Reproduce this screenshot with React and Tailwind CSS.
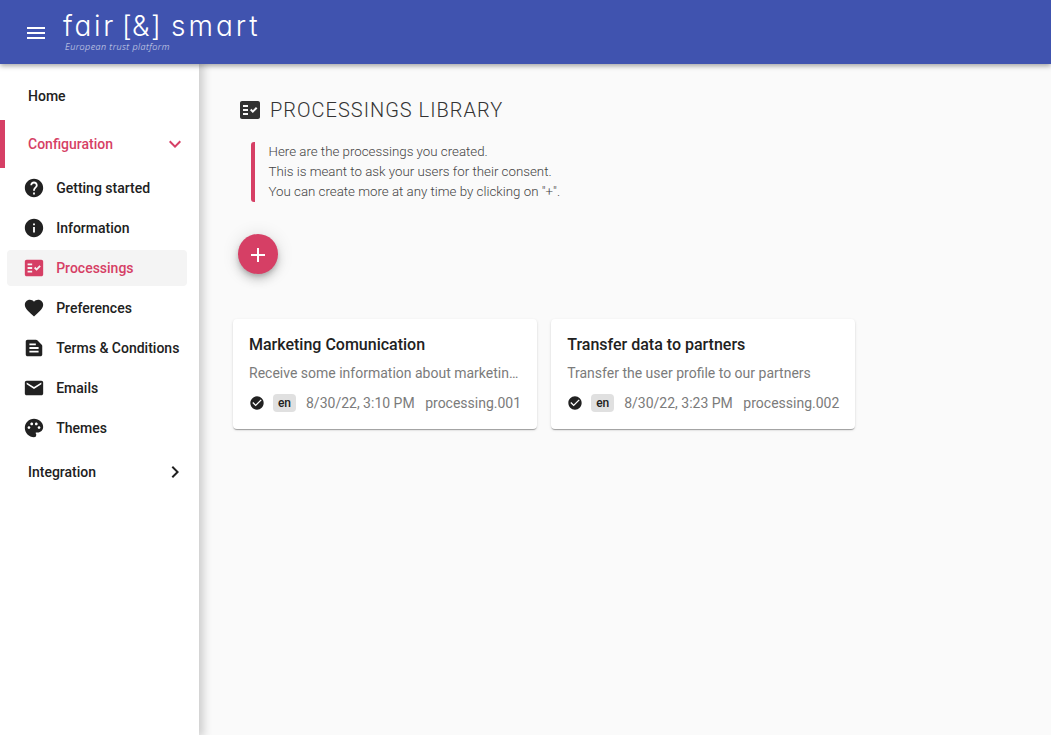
import React from 'react';
import {
  MdCheckCircle,
  MdEmail,
  MdFactCheck,
  MdFavorite,
  MdHelp,
  MdInfo,
  MdPalette,
  MdTextSnippet,
  MdAdd,
  MdMenu,
  MdKeyboardArrowDown,
  MdKeyboardArrowRight,
} from 'react-icons/md';

const links = [
  { label: 'Getting started', Icon: MdHelp },
  { label: 'Information', Icon: MdInfo },
  { label: 'Processings', Icon: MdFactCheck, active: true },
  { label: 'Preferences', Icon: MdFavorite },
  { label: 'Terms & Conditions', Icon: MdTextSnippet },
  { label: 'Emails', Icon: MdEmail },
  { label: 'Themes', Icon: MdPalette },
];

const cards = [
  {
    title: 'Marketing Comunication',
    text: 'Receive some information about marketing campaigns',
    date: '8/30/22, 3:10 PM',
    id: 'processing.001',
  },
  {
    title: 'Transfer data to partners',
    text: 'Transfer the user profile to our partners',
    date: '8/30/22, 3:23 PM',
    id: 'processing.002',
  },
];

function Header() {
  return (
    <header className="relative z-20 flex h-16 shrink-0 items-start bg-[#4053af] pl-6 text-white shadow-[0_2px_5px_rgba(0,0,0,0.35)]">
      <button className="mt-[21px]" aria-label="Menu">
        <MdMenu size={24} />
      </button>
      <div className="ml-[15px] pt-[10px]">
        <div className="flex h-[31px] items-start font-['Inter',sans-serif] text-[28px] leading-8 font-light [font-feature-settings:'cv11'_1]">
          <span className="w-[59px] tracking-[2.6px]">fair</span>
          <span className="flex w-[49px] items-start">
            <span className="w-[10px]">[</span>
            <span className="w-[19px]">&amp;</span>
            <span>]</span>
          </span>
          <span className="tracking-[3px]">smart</span>
        </div>
        <div className="ml-[2px] text-[9px] leading-3 font-light tracking-[0.45px] text-white/80 italic font-['Open_Sans',sans-serif]">
          European trust platform
        </div>
      </div>
    </header>
  );
}

function Sidebar() {
  return (
    <nav className="relative z-10 w-[199px] shrink-0 bg-white pt-2 text-sm font-medium shadow-[3px_0_8px_2px_rgba(0,0,0,0.17)]">
      <div className="flex h-12 items-center pl-7">Home</div>
      <div className="flex h-12 items-center justify-between border-l-5 border-[#d63f65] pr-3 pl-[23px] text-[#d63f65]">
        Configuration
        <MdKeyboardArrowDown size={24} />
      </div>
      <ul className="flex flex-col gap-1 py-0.5 pr-3 pl-[7px]">
        {links.map(({ label, Icon, active }) => (
          <li
            key={label}
            className={
              active
                ? 'flex h-9 items-center gap-[11.2px] rounded bg-[#f4f4f4] pl-4 whitespace-nowrap text-[#d63f65]'
                : 'flex h-9 items-center gap-[11.2px] rounded pl-4 whitespace-nowrap'
            }
          >
            <Icon size={22} className="shrink-0" />
            {label}
          </li>
        ))}
      </ul>
      <div className="flex h-12 items-center justify-between pr-3 pl-7">
        Integration
        <MdKeyboardArrowRight size={24} />
      </div>
    </nav>
  );
}

function Card({ title, text, date, id }) {
  return (
    <article className="h-[110px] w-[304px] rounded bg-white px-4 pt-[14px] shadow-[0_2px_1px_-1px_rgba(0,0,0,0.2),0_1px_1px_rgba(0,0,0,0.14),0_1px_3px_rgba(0,0,0,0.12)]">
      <h2 className="text-base leading-6 font-medium">{title}</h2>
      <p className="mt-1.5 truncate text-sm leading-5 text-[#7b7b7b]">{text}</p>
      <div className="mt-2.5 flex h-5 items-center text-sm whitespace-nowrap text-[#7b7b7b]">
        <MdCheckCircle size={16} className="shrink-0 text-[#212121]" />
        <span className="ml-2 flex h-[18px] w-[23px] shrink-0 items-center justify-center rounded bg-[#e0e0e0] text-xs font-medium text-[#212121]">
          en
        </span>
        <span className="ml-[10px]">{date}</span>
        <span className="ml-[10.5px]">{id}</span>
      </div>
    </article>
  );
}

export default function App() {
  return (
    <div className="flex h-screen flex-col overflow-hidden bg-[#fafafa] font-['Roboto',sans-serif] text-[#212121]">
      <Header />
      <div className="flex min-h-0 flex-1">
        <Sidebar />
        <main className="flex-1 pt-[30px] pl-[34px]">
          <h1 className="flex h-8 items-center gap-2 pl-[5px] text-xl font-light tracking-[1px] text-[#333]">
            <MdFactCheck size={24} />
            PROCESSINGS LIBRARY
          </h1>
          <div className="mt-4 ml-[18px] rounded-[3px] border-l-4 border-[#d63f65] pl-[13.5px] text-[13.3px] leading-5 font-light text-[#444]">
            <p>Here are the processings you created.</p>
            <p>This is meant to ask your users for their consent.</p>
            <p>You can create more at any time by clicking on "+".</p>
          </div>
          <button
            aria-label="Add"
            className="mt-8 ml-[5px] flex size-10 items-center justify-center rounded-full bg-[#d63f65] pt-px text-white shadow-[0_3px_5px_-1px_rgba(0,0,0,0.2),0_6px_10px_rgba(0,0,0,0.14),0_1px_18px_rgba(0,0,0,0.12)]"
          >
            <MdAdd size={24} className="mt-px" />
          </button>
          <div className="mt-[45px] flex gap-[14.2px]">
            {cards.map((card) => (
              <Card key={card.id} {...card} />
            ))}
          </div>
        </main>
      </div>
    </div>
  );
}
